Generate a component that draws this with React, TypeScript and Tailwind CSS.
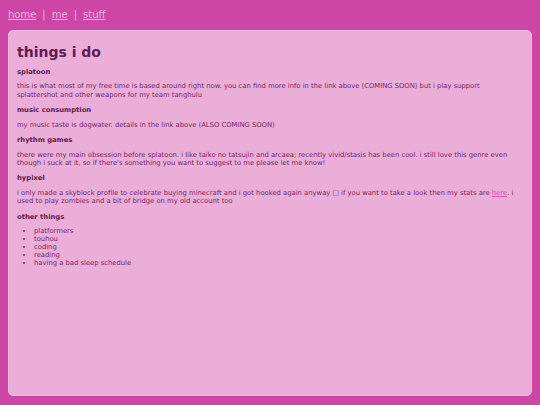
export default function App() {
  const sections = [
    {
      title: "splatoon",
      body: "this is what most of my free time is based around right now. you can find more info in the link above (COMING SOON) but i play support splattershot and other weapons for my team tanghulu",
    },
    {
      title: "music consumption",
      body: "my music taste is dogwater. details in the link above (ALSO COMING SOON)",
    },
    {
      title: "rhythm games",
      body: "there were my main obsession before splatoon. i like taiko no tatsujin and arcaea; recently vivid/stasis has been cool. i still love this genre even though i suck at it, so if there's something you want to suggest to me please let me know!",
    },
  ];
  const others = ["platformers", "touhou", "coding", "reading", "having a bad sleep schedule"];

  return (
    <div
      className="flex h-[405px] w-[540px] flex-col bg-[#cd45a5] px-[8px] pb-[9px] text-[#742764]"
      style={{ fontFamily: '"DejaVu Sans", Verdana, sans-serif' }}
    >
      <nav className="flex h-[30px] items-center gap-[6px] pb-[1px] text-[10px] text-[#f2b4e1]">
        <a href="#" className="underline">home</a>
        <span>|</span>
        <a href="#" className="underline">me</a>
        <span>|</span>
        <a href="#" className="underline">stuff</a>
      </nav>
      <main className="flex-1 rounded-[5px] border border-[#f1b9e2] bg-[#eaaed9] px-[8px] pt-[12px]">
        <h1 className="mb-[1px] text-[14px] font-bold leading-[18px] text-[#631a4f]">things i do</h1>
        {sections.map((s, i) => (
          <section key={s.title}>
            <h4
              className={`${i === 0 ? "mt-[7px]" : "mt-[7.5px]"} text-[6.8px] font-bold leading-[8px] text-[#5f1a4c]`}
            >
              {s.title}
            </h4>
            <p className="mt-[6.3px] max-w-[501px] text-[6.8px] leading-[8.2px]">{s.body}</p>
          </section>
        ))}
        <section>
          <h4 className="mt-[7.5px] text-[6.8px] font-bold leading-[8px] text-[#5f1a4c]">hypixel</h4>
          <p className="mt-[6.3px] max-w-[501px] text-[6.8px] leading-[8.2px]">
            i only made a skyblock profile to celebrate buying minecraft and i got hooked again anyway □ if you want to take a look then my stats are{" "}
            <a href="#" className="text-[#d757b0] underline">here</a>. i used to play zombies and a bit of bridge on my old account too
          </p>
        </section>
        <section>
          <h4 className="mt-[7.5px] text-[6.8px] font-bold leading-[8px] text-[#5f1a4c]">other things</h4>
          <ul className="mt-[6.3px] list-disc pl-[17px] text-[6.8px] leading-[8.1px]">
            {others.map((o) => (
              <li key={o}>{o}</li>
            ))}
          </ul>
        </section>
      </main>
    </div>
  );
}
